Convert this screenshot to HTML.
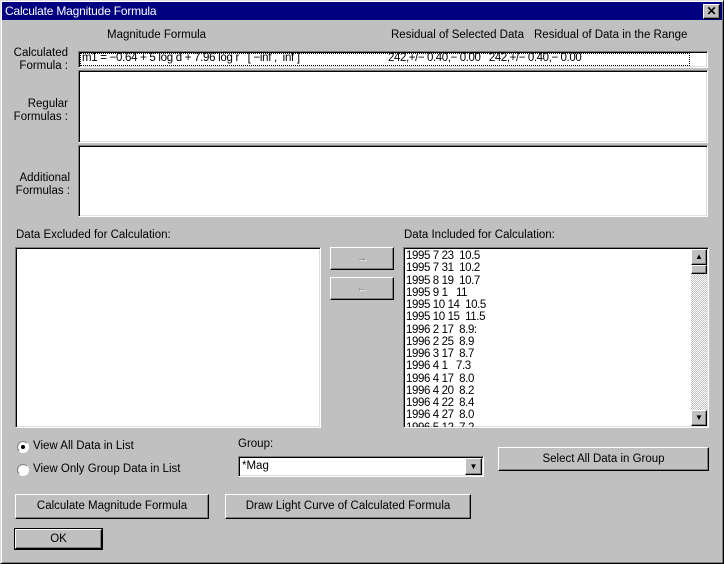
<!DOCTYPE html>
<html><head><style>
*{box-sizing:border-box;margin:0;padding:0}
body{width:724px;height:564px;background:#c0c0c0;font-family:"Liberation Sans","Noto Sans CJK JP",sans-serif;font-size:11px;color:#000;position:relative;overflow:hidden}
.a{position:absolute;white-space:nowrap}
.win{left:0;top:0;width:724px;height:564px;border:1px solid;border-color:#dfdfdf #000 #000 #dfdfdf;box-shadow:inset 1px 1px #fff,inset -1px -1px #808080}
.sunk{background:#fff;border:1px solid;border-color:#808080 #fff #fff #808080;box-shadow:inset 1px 1px #000,inset -1px -1px #dfdfdf}
.btn{background:#c0c0c0;border:1px solid;border-color:#fff #000 #000 #fff;box-shadow:inset -1px -1px #808080;text-align:center}
.t{letter-spacing:-0.3px;transform:scaleX(0.95);transform-origin:left}
.row{height:12.25px;line-height:12px;font-size:11.5px;letter-spacing:-0.4px}
</style></head><body>
<div class="a win"></div>
<div class="a" style="left:2px;top:2px;width:720px;height:18px;background:#000080"></div>
<div class="a" style="left:5px;top:4px;color:#fff;font-size:12px;letter-spacing:-0.2px">Calculate Magnitude Formula</div>
<div class="a btn" style="left:703px;top:4px;width:17px;height:15px;font-size:12px;line-height:12px;font-weight:bold">✕</div>

<div class="a" style="left:107px;top:29px;font-size:11.5px">Magnitude Formula</div>
<div class="a" style="left:391px;top:29px;font-size:11.5px">Residual of Selected Data</div>
<div class="a" style="left:534px;top:29px;font-size:11.5px">Residual of Data in the Range</div>

<div class="a" style="left:6px;top:47px;width:62px;text-align:right;line-height:13px;font-size:11.5px">Calculated<br>Formula :</div>
<div class="a" style="left:6px;top:98px;width:62px;text-align:right;line-height:13px;font-size:11.5px">Regular<br>Formulas :</div>
<div class="a" style="left:6px;top:172px;width:64px;text-align:right;line-height:13px;font-size:11.5px">Additional<br>Formulas :</div>

<div class="a sunk" style="left:78px;top:51px;width:630px;height:17px"></div>
<div class="a" style="left:80px;top:53px;width:610px;height:13px;border:1px dotted #000"></div>
<div class="a" style="left:82px;top:52px;font-size:11.5px;letter-spacing:-0.3px">m1 = −0.64 + 5 log d + 7.96 log r &nbsp;&nbsp;[ −inf , &nbsp;inf ]</div>
<div class="a" style="left:388px;top:52px;font-size:11.5px;letter-spacing:-0.4px">242,+/− 0.40,− 0.00 &nbsp;&nbsp;242,+/− 0.40,− 0.00</div>

<div class="a sunk" style="left:78px;top:70px;width:630px;height:73px"></div>
<div class="a sunk" style="left:78px;top:145px;width:630px;height:72px"></div>

<div class="a" style="left:16px;top:229px;font-size:11.5px">Data Excluded for Calculation:</div>
<div class="a" style="left:404px;top:229px;font-size:11.5px">Data Included for Calculation:</div>
<div class="a sunk" style="left:15px;top:247px;width:306px;height:181px"></div>

<div class="a btn" style="left:330px;top:247px;width:64px;height:23px;color:#808080;line-height:20px;text-shadow:1px 1px #fff">→</div>
<div class="a btn" style="left:330px;top:277px;width:64px;height:23px;color:#808080;line-height:20px;text-shadow:1px 1px #fff">←</div>

<div class="a sunk" style="left:403px;top:247px;width:306px;height:181px;overflow:hidden">
<div style="position:absolute;left:2px;top:2px">
<div class="row">1995 7 23 &nbsp;10.5</div><div class="row">1995 7 31 &nbsp;10.2</div><div class="row">1995 8 19 &nbsp;10.7</div><div class="row">1995 9 1 &nbsp;&nbsp;11</div><div class="row">1995 10 14 &nbsp;10.5</div><div class="row">1995 10 15 &nbsp;11.5</div><div class="row">1996 2 17 &nbsp;8.9:</div><div class="row">1996 2 25 &nbsp;8.9</div><div class="row">1996 3 17 &nbsp;8.7</div><div class="row">1996 4 1 &nbsp;&nbsp;7.3</div><div class="row">1996 4 17 &nbsp;8.0</div><div class="row">1996 4 20 &nbsp;8.2</div><div class="row">1996 4 22 &nbsp;8.4</div><div class="row">1996 4 27 &nbsp;8.0</div><div class="row">1996 5 12 &nbsp;7.2</div>
</div>
<div style="position:absolute;left:287px;top:1px;width:16px;height:177px;background:repeating-conic-gradient(#c0c0c0 0 25%,#fff 0 50%) 0 0/2px 2px"></div>
<div class="btn" style="position:absolute;left:287px;top:1px;width:16px;height:16px;font-size:8px;line-height:14px">▲</div>
<div class="btn" style="position:absolute;left:287px;top:17px;width:16px;height:9px"></div>
<div class="btn" style="position:absolute;left:287px;top:162px;width:16px;height:16px;font-size:8px;line-height:14px">▼</div>
</div>

<div class="a" style="left:17px;top:441px;width:12px;height:12px;border-radius:50%;background:#fff;border:1px solid;border-color:#808080 #fff #fff #808080"></div>
<div class="a" style="left:21px;top:445px;width:4px;height:4px;border-radius:50%;background:#000"></div>
<div class="a" style="left:33px;top:440px;font-size:11.5px">View All Data in List</div>
<div class="a" style="left:17px;top:464px;width:12px;height:12px;border-radius:50%;background:#fff;border:1px solid;border-color:#808080 #fff #fff #808080"></div>
<div class="a" style="left:33px;top:463px;font-size:11.5px">View Only Group Data in List</div>

<div class="a" style="left:238px;top:438px;font-size:11.5px">Group:</div>
<div class="a sunk" style="left:238px;top:456px;width:246px;height:21px"></div>
<div class="a" style="left:242px;top:460px;font-size:11.5px">*Mag</div>
<div class="a btn" style="left:465px;top:458px;width:17px;height:17px;font-size:8px;line-height:15px">▼</div>

<div class="a btn" style="left:498px;top:447px;width:211px;height:24px;line-height:22px;font-size:11.5px">Select All Data in Group</div>
<div class="a btn" style="left:15px;top:494px;width:194px;height:25px;line-height:23px;font-size:11.5px">Calculate Magnitude Formula</div>
<div class="a btn" style="left:225px;top:494px;width:246px;height:25px;line-height:23px;font-size:11.5px">Draw Light Curve of Calculated Formula</div>
<div class="a" style="left:14px;top:528px;width:89px;height:22px;border:1px solid #000"></div>
<div class="a btn" style="left:15px;top:529px;width:87px;height:20px;line-height:18px;font-size:11.5px">OK</div>
</body></html>
